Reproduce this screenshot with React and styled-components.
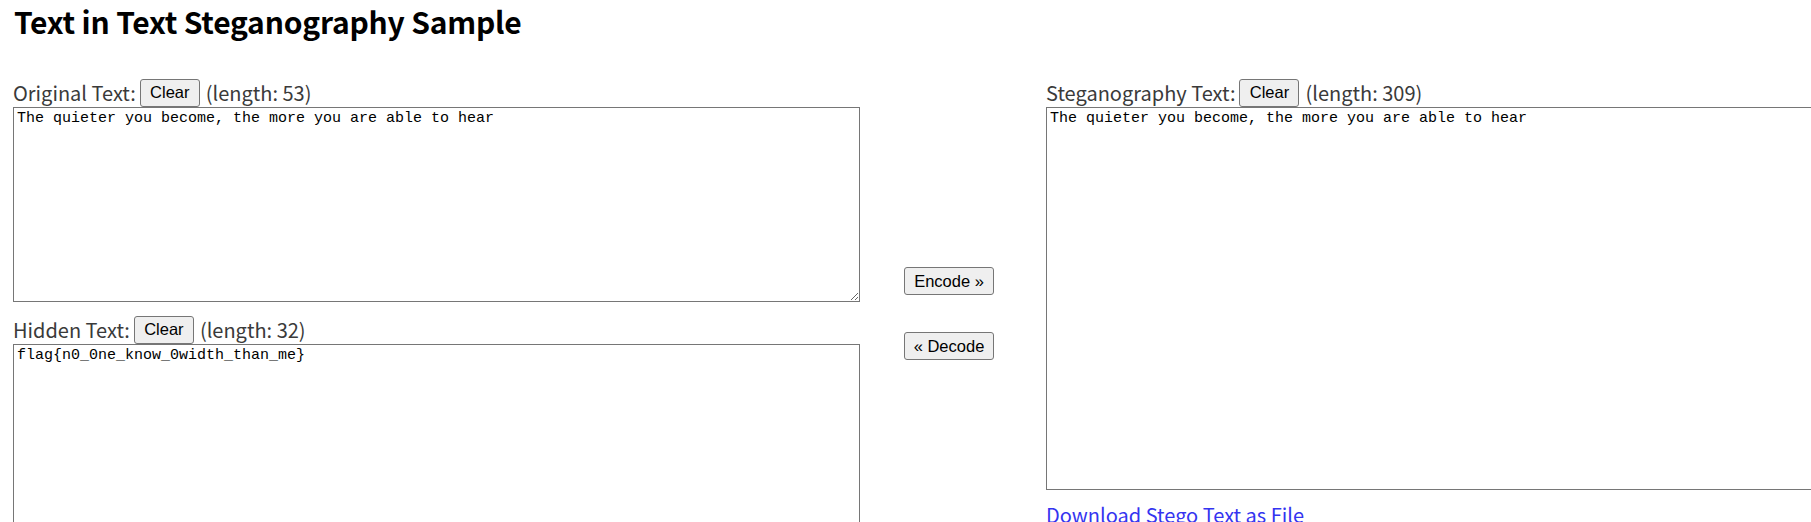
import React, { useState } from "react";
import styled, { createGlobalStyle } from "styled-components";

const GlobalStyle = createGlobalStyle`
  html, body {
    margin: 0;
    padding: 0;
    overflow: hidden;
    background: #fff;
  }
  body {
    font-family: "Noto Sans CJK JP", "Noto Sans", sans-serif;
    color: #333;
  }
`;

const Page = styled.div`
  padding: 3px 0 0 13px;
  width: 2000px;
`;

const Title = styled.h2`
  margin: 0 0 40px 1px;
  font: 700 30px/36px "Noto Sans CJK JP", "Noto Sans", sans-serif;
  letter-spacing: -0.2px;
  color: #000;
`;

const Columns = styled.div`
  display: flex;
  align-items: flex-start;
`;

const Column = styled.div`
  display: flex;
  flex-direction: column;
  width: 847px;
  flex: none;
`;

const Middle = styled.div`
  display: flex;
  flex-direction: column;
  align-items: flex-start;
  gap: 37px;
  flex: none;
  width: 90px;
  padding: 188px 52px 0 44px;
`;

const LabelRow = styled.div`
  display: flex;
  align-items: center;
  height: 27px;
  margin-top: ${({ spaced }) => (spaced ? "14px" : "0")};
  font-size: 20px;
  line-height: 27px;
  color: #3a3a3a;
  white-space: nowrap;
`;

const LabelText = styled.span`
  margin-right: 4px;
`;

const Button = styled.button`
  box-sizing: border-box;
  height: 28px;
  width: ${({ w }) => w || 60}px;
  margin-right: ${({ inline }) => (inline ? "6px" : "0")};
  padding: 0;
  font: 400 16.5px "Liberation Sans", Arial, sans-serif;
  color: #000;
  background: #efefef;
  border: 1px solid #767676;
  border-radius: 3px;
  cursor: pointer;
`;

const TextBox = styled.textarea`
  box-sizing: border-box;
  display: block;
  width: 847px;
  height: ${({ h }) => h}px;
  margin: 1px 0 0;
  padding: 2px 3px;
  border: 1px solid #767676;
  border-radius: 0;
  font: 15px/18px "Liberation Mono", "DejaVu Sans Mono", monospace;
  color: #000;
  background: #fff;
  outline: none;
`;

const Link = styled.a`
  margin-top: 11px;
  font-size: 20px;
  line-height: 27px;
  color: #3434f0;
  text-decoration: none;
  cursor: pointer;
`;

const cover = "The quieter you become, the more you are able to hear";
const secret = "flag{n0_0ne_know_0width_than_me}";

function Field({ label, value, onChange, onClear, height, spaced, length }) {
  return (
    <>
      <LabelRow spaced={spaced}>
        <LabelText>{label}</LabelText>
        <Button inline onClick={onClear}>Clear</Button>
        <span>(length: {length ?? value.length})</span>
      </LabelRow>
      <TextBox h={height} value={value} onChange={(e) => onChange(e.target.value)} spellCheck={false} />
    </>
  );
}

export default function App() {
  const [original, setOriginal] = useState(cover);
  const [hidden, setHidden] = useState(secret);
  const [stego, setStego] = useState(cover);

  return (
    <Page>
      <GlobalStyle />
      <Title>Text in Text Steganography Sample</Title>
      <Columns>
        <Column>
          <Field label="Original Text:" value={original} onChange={setOriginal} onClear={() => setOriginal("")} height={195} />
          <Field label="Hidden Text:" value={hidden} onChange={setHidden} onClear={() => setHidden("")} height={260} spaced />
        </Column>
        <Middle>
          <Button w={90}>Encode »</Button>
          <Button w={90}>« Decode</Button>
        </Middle>
        <Column>
          <Field
            label="Steganography Text:"
            value={stego}
            onChange={setStego}
            onClear={() => setStego("")}
            height={383}
            length={stego === cover ? 309 : stego.length}
          />
          <Link>Download Stego Text as File</Link>
        </Column>
      </Columns>
    </Page>
  );
}
